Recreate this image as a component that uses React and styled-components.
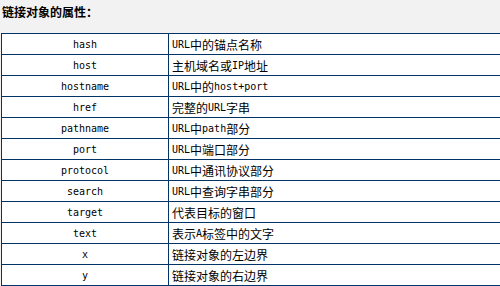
import React from "react";
import styled, { createGlobalStyle } from "styled-components";

const Global = createGlobalStyle`
  html, body { margin: 0; padding: 0; background: #f2f2f2; overflow: hidden; }
  body { width: 500px; height: 286px; }
`;

const Page = styled.div`
  width: 500px;
  height: 286px;
  background: #f2f2f2;
  overflow: hidden;
`;

const Title = styled.h3`
  margin: 0;
  height: 33px;
  padding-left: 2px;
  line-height: 23px;
  font-family: "Noto Sans CJK SC", sans-serif;
  font-size: 12px;
  font-weight: 700;
  color: #000;
`;

const Table = styled.table`
  margin-left: 1px;
  width: 500px;
  border-collapse: collapse;
  table-layout: fixed;
  background: #fff;
`;

const Cell = styled.td`
  padding: 0;
  border: 1px solid #003366;
  vertical-align: middle;
`;

const CellBox = styled.div`
  height: 20px;
  display: flex;
  align-items: center;
  justify-content: ${(p) => (p.$center ? "center" : "flex-start")};
  padding: 1px 0 0 ${(p) => (p.$center ? 0 : 3)}px;
  box-sizing: border-box;
  font-family: ${(p) => (p.$center ? '"DejaVu Sans Mono", monospace' : '"Noto Sans CJK SC", sans-serif')};
  font-size: ${(p) => (p.$center ? 10 : 12)}px;
  line-height: 1;
  color: #000;
  white-space: pre;
  overflow: hidden;
`;

const Latin = styled.span`
  font-family: "DejaVu Sans Mono", monospace;
  font-size: 10px;
  line-height: 1;
`;

const rows = [
  ["hash", "URL中的锚点名称"],
  ["host", "主机域名或IP地址"],
  ["hostname", "URL中的host+port"],
  ["href", "完整的URL字串"],
  ["pathname", "URL中path部分"],
  ["port", "URL中端口部分"],
  ["protocol", "URL中通讯协议部分"],
  ["search", "URL中查询字串部分"],
  ["target", "代表目标的窗口"],
  ["text", "表示A标签中的文字"],
  ["x", "链接对象的左边界"],
  ["y", "链接对象的右边界"],
];

function Mixed({ text }) {
  const parts = text.split(/([A-Za-z+]+)/).filter(Boolean);
  return parts.map((p, i) =>
    /^[A-Za-z+]+$/.test(p) ? <Latin key={i}>{p}</Latin> : <span key={i}>{p}</span>
  );
}

export default function App() {
  return (
    <Page>
      <Global />
      <Title>链接对象的属性：</Title>
      <Table>
        <colgroup>
          <col style={{ width: 167 }} />
          <col />
        </colgroup>
        <tbody>
          {rows.map(([k, v]) => (
            <tr key={k}>
              <Cell>
                <CellBox $center>{k}</CellBox>
              </Cell>
              <Cell>
                <CellBox>
                  <Mixed text={v} />
                </CellBox>
              </Cell>
            </tr>
          ))}
        </tbody>
      </Table>
    </Page>
  );
}
